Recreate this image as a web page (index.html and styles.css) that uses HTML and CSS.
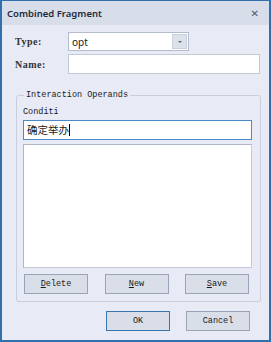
FILE: index.html
```html
<!DOCTYPE html>
<html lang="en">
<head>
    <meta charset="UTF-8">
    <title>Combined Fragment</title>
    <link rel="stylesheet" href="styles.css">
</head>
<body>
    <div class="window">
        <div class="titlebar">
            <span class="title">Combined Fragment</span>
            <span class="close">&#x2715;</span>
        </div>

        <div class="content">
            <div class="field-row row-type">
                <label class="field-label">Type:</label>
                <div class="combo">
                    <span class="combo-value">opt</span>
                    <span class="combo-btn"><span class="arrow"></span></span>
                </div>
            </div>

            <div class="field-row row-name">
                <label class="field-label">Name:</label>
                <input type="text" class="text-input name-input">
            </div>

            <fieldset class="group">
                <legend>Interaction Operands</legend>
                <div class="cond-label">Condition</div>
                <div class="text-input cond-input">确定举办<span class="caret"></span></div>
                <div class="listbox"></div>
                <div class="button-row">
                    <button class="btn"><u>D</u>elete</button>
                    <button class="btn"><u>N</u>ew</button>
                    <button class="btn"><u>S</u>ave</button>
                </div>
            </fieldset>

            <div class="footer">
                <button class="btn btn-default">OK</button>
                <button class="btn">Cancel</button>
            </div>
        </div>
    </div>
</body>
</html>
```

FILE: styles.css
```css
html, body {
    margin: 0;
    padding: 0;
    background: #e8eaf4;
}
.window {
    width: 271px;
    height: 342px;
    box-sizing: border-box;
    border: 2px solid #3270ad;
    border-top: 1px solid #3270ad;
    background: #e8eaf5;
    font-family: "Liberation Mono", monospace;
    font-size: 8.5px;
    color: #1a1a1a;
}
.titlebar {
    height: 24px;
    background: #d7dde9;
    display: flex;
    align-items: center;
    justify-content: space-between;
    padding: 0 10px 0 5px;
}
.title {
    font-family: "Noto Sans", sans-serif;
    font-size: 9.5px;
    font-weight: 600;
    color: #1e2a3a;
}
.close {
    font-family: "DejaVu Sans", sans-serif;
    font-size: 10px;
    color: #4a5a70;
}
.content {
    padding: 7px 8px 0 13px;
}
.field-row {
    display: flex;
    align-items: center;
}
.field-label {
    width: 53px;
    font-family: "Liberation Serif", serif;
    font-size: 10px;
    font-weight: bold;
    letter-spacing: 0.5px;
    color: #333;
}
.combo {
    width: 121px;
    height: 19px;
    box-sizing: border-box;
    border: 1px solid #b3bccd;
    background: #fff;
    display: flex;
    align-items: center;
    justify-content: space-between;
    padding: 1px;
}
.combo-value {
    font-family: "Noto Sans", sans-serif;
    font-size: 10px;
    padding-left: 2px;
}
.combo-btn {
    width: 15px;
    height: 15px;
    background: #dde1ea;
    border: 1px solid #c9cfdb;
    box-sizing: border-box;
    display: flex;
    align-items: center;
    justify-content: center;
}
.arrow {
    width: 0;
    height: 0;
    border-left: 2px solid transparent;
    border-right: 2px solid transparent;
    border-top: 2px solid #666;
}
.row-name {
    margin-top: 3px;
}
.text-input {
    box-sizing: border-box;
    border: 1px solid #c3cad8;
    background: #fff;
    outline: none;
}
.name-input {
    width: 192px;
    height: 20px;
}
.group {
    margin: 16px 0 0 1px;
    width: 245px;
    height: 212px;
    box-sizing: border-box;
    border: 1px solid #c8cedb;
    border-radius: 3px;
    padding: 0 8px 0 6px;
}
.group legend {
    padding: 0 2px;
    margin-left: 1px;
    font-size: 8.5px;
}
.cond-label {
    width: 35px;
    overflow: hidden;
    white-space: nowrap;
    margin-top: 7px;
    height: 10px;
    line-height: 10px;
}
.cond-input {
    margin-top: 3px;
    width: 229px;
    height: 20px;
    border-color: #4a8ac6;
    font-family: "Noto Sans CJK SC", sans-serif;
    font-size: 10.5px;
    line-height: 18px;
    padding-left: 3px;
    display: flex;
    align-items: center;
}
.caret {
    display: inline-block;
    width: 1px;
    height: 12px;
    background: #000;
}
.listbox {
    margin-top: 4px;
    width: 229px;
    height: 124px;
    box-sizing: border-box;
    border: 1px solid #c3cad8;
    border-left-color: #b0b8c8;
    border-top-color: #b0b8c8;
    background: #fff;
}
.button-row {
    display: flex;
    justify-content: space-between;
    margin-top: 6px;
    padding-left: 1px;
    width: 225px;
}
.btn {
    width: 64px;
    height: 20px;
    box-sizing: border-box;
    border: 1px solid #99a4b9;
    background: #d9dee9;
    font-family: "Liberation Mono", monospace;
    font-size: 8.5px;
    color: #1a1a1a;
    padding: 0;
}
.footer {
    display: flex;
    justify-content: flex-end;
    gap: 16px;
    margin-top: 9px;
    padding-right: 11px;
}
.btn-default {
    border-color: #3a74ae;
}
```
